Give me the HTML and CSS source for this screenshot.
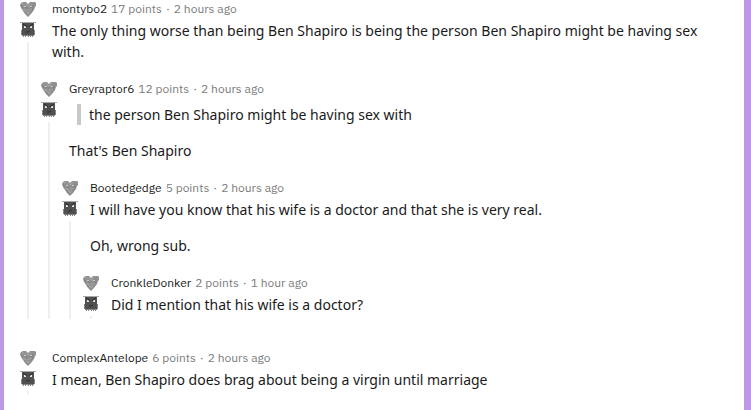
FILE: index.html
```html
<!DOCTYPE html>
<html lang="en">
  <head>
    <meta charset="UTF-8" />
    <meta name="viewport" content="width=device-width, initial-scale=1.0" />
    <title>Comments</title>
    <link rel="stylesheet" href="styles.css">
  </head>
  <body>
    <svg class="defs" width="0" height="0">
      <!-- upvote: heart -->
      <symbol id="up" viewBox="0 0 16 15">
        <path d="M0 3 1 1 3 0H6L8 2 10 0H15L16 1V4L15 5 14 8 11 12 9 14 8 15 5 12 3 9 1 6Z" fill="#929292" />
        <path d="M2 2h2M6 2l2 2 3-3M2 6l4 4 2 2 4-5M5 8h5M7 10l2 2" fill="none" stroke="#aaa" stroke-width=".8" />
        <path d="M1 3l2 4M7 5v3M13 3v4l-3 3M4 9l4 4" fill="none" stroke="#787878" stroke-width=".7" />
        <path d="M4 4h2v1H4zM10 4h2v1h-2z" fill="#ccc" />
        <path d="M5 5h1v1H5zM11 5h1v1h-1z" fill="#777" />
      </symbol>
      <!-- downvote: square face -->
      <symbol id="down" viewBox="0 0 16 15">
        <path d="M0 0h16v1H0z" fill="#a8a8a8" />
        <path d="M1 8h1V1h12v7h1v5h-1v1h-1v1h-1v-1h-1v1h-1v-1H9v1H8v-1H6v1H5v-1H4v1H3v-1H2v-1H1z" fill="#858585" />
        <path d="M2 1h12v12H2z" fill="#505050" />
        <path d="M3 2l4 2.5M13 2L9 4.500M6 10h2l2-1" fill="none" stroke="#2c2c2c" />
        <path d="M4 4h1l1 1v1H4zM12 4h-1l-1 1v1h2z" fill="#e4e4e4" />
      </symbol>
    </svg>

    <div class="comments">
      <div class="comment top">
        <div class="rail">
          <svg class="up"><use href="#up" /></svg>
          <svg class="down"><use href="#down" /></svg>
          <div class="line"></div>
        </div>
        <div class="content">
          <div class="meta"><span class="user">montybo2</span><span class="points">17 points</span><span class="dot">·</span><span class="time">2 hours ago</span></div>
          <div class="text">
            <p>The only thing worse than being Ben Shapiro is being the person Ben Shapiro might be having sex with.</p>
          </div>

          <div class="comment">
            <div class="rail">
              <svg class="up"><use href="#up" /></svg>
              <svg class="down"><use href="#down" /></svg>
              <div class="line"></div>
            </div>
            <div class="content">
              <div class="meta"><span class="user">Greyraptor6</span><span class="points">12 points</span><span class="dot">·</span><span class="time">2 hours ago</span></div>
              <div class="text">
                <blockquote>the person Ben Shapiro might be having sex with</blockquote>
                <p>That's Ben Shapiro</p>
              </div>

              <div class="comment">
                <div class="rail">
                  <svg class="up"><use href="#up" /></svg>
                  <svg class="down"><use href="#down" /></svg>
                  <div class="line"></div>
                </div>
                <div class="content">
                  <div class="meta"><span class="user">Bootedgedge</span><span class="points">5 points</span><span class="dot">·</span><span class="time">2 hours ago</span></div>
                  <div class="text">
                    <p>I will have you know that his wife is a doctor and that she is very real.</p>
                    <p>Oh, wrong sub.</p>
                  </div>

                  <div class="comment">
                    <div class="rail">
                      <svg class="up"><use href="#up" /></svg>
                      <svg class="down"><use href="#down" /></svg>
                      <div class="line"></div>
                    </div>
                    <div class="content">
                      <div class="meta"><span class="user">CronkleDonker</span><span class="points">2 points</span><span class="dot">·</span><span class="time">1 hour ago</span></div>
                      <div class="text">
                        <p>Did I mention that his wife is a doctor?</p>
                      </div>
                    </div>
                  </div>
                </div>
              </div>
            </div>
          </div>
        </div>
      </div>

      <div class="comment top">
        <div class="rail">
          <svg class="up"><use href="#up" /></svg>
          <svg class="down"><use href="#down" /></svg>
          <div class="line"></div>
        </div>
        <div class="content">
          <div class="meta"><span class="user">ComplexAntelope</span><span class="points">6 points</span><span class="dot">·</span><span class="time">2 hours ago</span></div>
          <div class="text">
            <p>I mean, Ben Shapiro does brag about being a virgin until marriage</p>
          </div>
        </div>
      </div>
    </div>
  </body>
</html>
```
FILE: styles.css
```css
* {
  box-sizing: border-box;
}
body {
  margin: 0;
  background: #bc98e6;
  font-family: "Noto Sans", sans-serif;
  color: #1a1a1b;
}
.defs {
  display: block;
}
.comments {
  height: 410px;
  margin: 0 7px 0 4px;
  padding: 1px 24px 0 16px;
  background: #fff;
  overflow: hidden;
}
.comment {
  display: flex;
}
.comment.top + .comment.top {
  margin-top: 31px;
}
.rail {
  display: flex;
  flex-direction: column;
  flex: none;
  width: 21px;
}
.up {
  width: 16px;
  height: 15px;
  margin-top: 1px;
}
.down {
  width: 16px;
  height: 15px;
  margin-top: 5px;
}
.line {
  flex: 1;
  width: 2px;
  margin: 5px 0 0 7px;
  background: #edeff1;
}
.content {
  flex: 1;
  min-width: 0;
}
.meta,
.text {
  padding-left: 7px;
}
.top > .content > .meta,
.top > .content > .text {
  padding-left: 11px;
}
.meta {
  display: flex;
  height: 16px;
  font-family: "IBM Plex Sans", Inter, sans-serif;
  font-size: 12px;
  line-height: 16px;
  color: #7c7c7c;
  white-space: nowrap;
}
.user {
  margin-right: 4px;
  color: #1a1a1b;
}
.dot {
  margin: 0 4px;
}
.text {
  padding-top: 3px;
  padding-bottom: 4px;
  font-size: 14px;
  line-height: 21px;
}
.text p {
  margin: 0;
}
.text p + p,
.text blockquote + p {
  margin-top: 15px;
}
.text + .comment {
  margin-top: 15px;
}
.text blockquote {
  margin: 4px 0 0 8px;
  padding-left: 8px;
  border-left: 4px solid #c8c8c8;
}
```
